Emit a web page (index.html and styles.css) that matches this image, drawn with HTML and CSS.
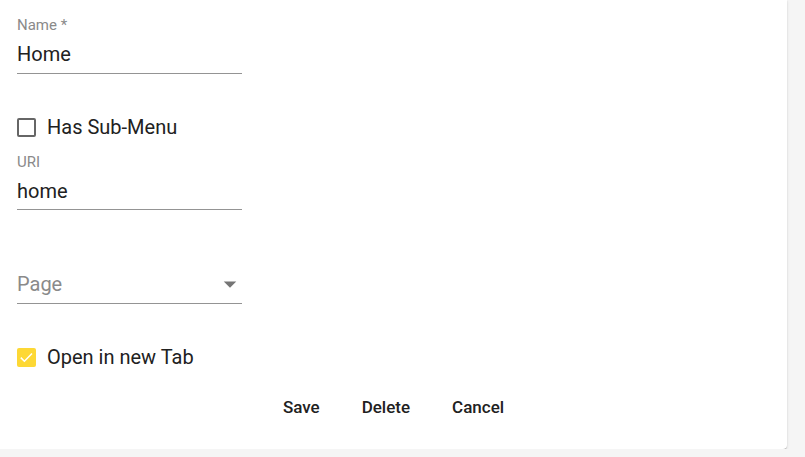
FILE: index.html
```html
<!DOCTYPE html>
<html lang="en">
<head>
    <meta charset="UTF-8">
    <title>Menu item</title>
    <link rel="stylesheet" href="styles.css">
</head>
<body>
    <div class="card">
        <div class="field">
            <label class="label">Name *</label>
            <div class="input">Home</div>
        </div>

        <div class="check check-sub">
            <span class="box"></span>
            <span>Has Sub-Menu</span>
        </div>

        <div class="field field-uri">
            <label class="label">URI</label>
            <div class="input">home</div>
        </div>

        <div class="field field-select">
            <div class="input placeholder">
                <span>Page</span>
                <svg class="arrow" viewBox="0 0 24 24" width="30" height="30"><path d="M7 10l5 5 5-5z"/></svg>
            </div>
        </div>

        <div class="check check-tab">
            <span class="box checked">
                <svg viewBox="0 0 19 19" width="19" height="19"><path d="M3.8 9.6l3.6 3.6 7.6-7.8" fill="none" stroke="#fff" stroke-width="1.5"/></svg>
            </span>
            <span>Open in new Tab</span>
        </div>

        <div class="actions">
            <button>Save</button>
            <button>Delete</button>
            <button>Cancel</button>
        </div>
    </div>
</body>
</html>
```

FILE: styles.css
```css
body {
    margin: 0;
    background: #f5f5f5;
    font-family: Roboto, "Noto Sans", sans-serif;
    color: #212121;
}
.card {
    width: 787px;
    height: 449px;
    padding: 17px 0 0 17px;
    box-sizing: border-box;
    background: #fff;
    border-radius: 0 0 4px 0;
    box-shadow: 0 2px 1px -1px rgba(0,0,0,0.2), 0 1px 1px 0 rgba(0,0,0,0.14), 0 1px 3px 0 rgba(0,0,0,0.12);
}
.field {
    width: 225px;
}
.label {
    display: block;
    font-size: 15px;
    line-height: 16px;
    color: #8a8a8a;
}
.input {
    font-size: 20px;
    line-height: 24px;
    padding: 9px 0 7px;
    border-bottom: 1px solid #949494;
}
.field-uri {
    margin-top: 15px;
}
.field-uri .input {
    padding-bottom: 6px;
}
.field-select {
    margin-top: 62px;
}
.placeholder {
    display: flex;
    align-items: center;
    justify-content: space-between;
    height: 24px;
    padding-top: 0;
    color: #8a8a8a;
}
.arrow {
    fill: #757575;
    margin-right: -3px;
}
.check {
    display: flex;
    align-items: center;
    gap: 11px;
    height: 24px;
    font-size: 20px;
    line-height: 24px;
}
.check-sub {
    margin-top: 41px;
}
.check-tab {
    margin-top: 41px;
}
.box {
    width: 19px;
    height: 19px;
    box-sizing: border-box;
    border: 2px solid #666;
    border-radius: 2px;
}
.box.checked {
    display: flex;
    border: none;
    background: #fdd835;
}
.actions {
    display: flex;
    justify-content: center;
    margin-top: 22px;
    margin-left: -17px;
}
button {
    font-family: Roboto, "Noto Sans", sans-serif;
    font-size: 17px;
    font-weight: 500;
    line-height: 20px;
    color: #212121;
    background: none;
    border: none;
    padding: 6px 21px;
    cursor: pointer;
}
```
